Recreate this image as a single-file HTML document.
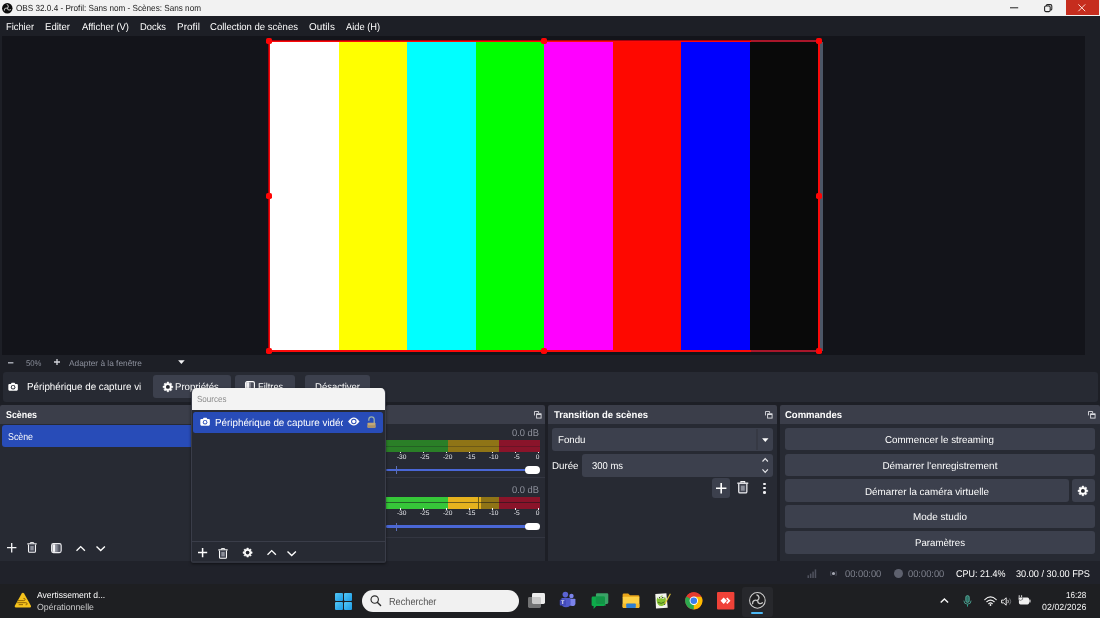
<!DOCTYPE html>
<html lang="fr"><head><meta charset="utf-8"><title>OBS 32.0.4</title>
<style>
*{box-sizing:border-box;margin:0;padding:0}
html,body{width:1100px;height:618px;overflow:hidden;background:#1d1f26}
body{position:relative;font-family:"Liberation Sans",sans-serif;color:#fefefe;font-size:9.9px;text-rendering:geometricPrecision}
.a{position:absolute}
.t{position:absolute;white-space:nowrap;line-height:12px;height:12px}
svg{position:absolute;overflow:visible}
#w{position:absolute;left:0;top:0;width:1100px;height:618px;will-change:transform;transform:translateZ(0)}
</style></head><body><div id="w">
<div class="a" style="left:0px;top:0px;width:1100px;height:16.3px;background:#f2f2f2;"></div>
<div class="a" style="left:0px;top:15.8px;width:1100px;height:0.8px;background:#8f9094;opacity:.5"></div>
<svg style="left:1.6px;top:2.6px" width="10.6" height="10.6" viewBox="0 0 11 11"><circle cx="5.5" cy="5.5" r="5.4" fill="#0b0b0b"/><g fill="none" stroke="#c4c4c4" stroke-width="1.05" stroke-linecap="round"><path d="M5.3 1.7C6.9 2.6 6.9 4.6 5.4 5.3"/><path d="M8.9 6.9C7.4 8 5.7 7 5.8 5.4"/><path d="M2.4 7.6C2.3 5.7 4 4.7 5.4 5.6"/></g></svg>
<div class="t" style="left:16.00px;top:1.70px;font-size:8.8px;color:#1c1c1c;transform:scaleX(0.9273);transform-origin:0 50%;">OBS 32.0.4 - Profil: Sans nom - Scènes: Sans nom</div>
<div class="a" style="left:1066px;top:0px;width:33px;height:15.3px;background:#c62d1e;"></div>
<svg style="left:1010px;top:6.7px" width="9" height="2" viewBox="0 0 9 2"><path d="M0 0.8H8.2" stroke="#222" stroke-width="1"/></svg>
<svg style="left:1043.5px;top:4px" width="9" height="9" viewBox="0 0 9 9"><rect x="0.6" y="2" width="5.6" height="5.6" rx="1.3" fill="none" stroke="#222" stroke-width="1.05"/><path d="M2.3 1.9V1.6Q2.3 0.6 3.4 0.6H6.4Q7.8 0.6 7.8 2V5Q7.8 6 6.8 6H6.3" fill="none" stroke="#222" stroke-width="1.05"/></svg>
<svg style="left:1078px;top:4px" width="8" height="8" viewBox="0 0 8 8"><path d="M0.4 0.4L7.2 7.2M7.2 0.4L0.4 7.2" stroke="#ffe9e0" stroke-width="0.95"/></svg>
<div class="a" style="left:0px;top:16px;width:1100px;height:20px;background:#1d1f26;"></div>
<div class="t" style="left:6.00px;top:21.90px;font-size:9.9px;color:#fefefe;transform:scaleX(0.9446);transform-origin:0 50%;">Fichier</div>
<div class="t" style="left:45.00px;top:21.90px;font-size:9.9px;color:#fefefe;transform:scaleX(0.9691);transform-origin:0 50%;">Editer</div>
<div class="t" style="left:82.00px;top:21.90px;font-size:9.9px;color:#fefefe;transform:scaleX(0.9549);transform-origin:0 50%;">Afficher (V)</div>
<div class="t" style="left:140.00px;top:21.90px;font-size:9.9px;color:#fefefe;transform:scaleX(0.9476);transform-origin:0 50%;">Docks</div>
<div class="t" style="left:177.00px;top:21.90px;font-size:9.9px;color:#fefefe;letter-spacing:0.083px;">Profil</div>
<div class="t" style="left:210.00px;top:21.90px;font-size:9.9px;color:#fefefe;transform:scaleX(0.9657);transform-origin:0 50%;">Collection de scènes</div>
<div class="t" style="left:309.00px;top:21.90px;font-size:9.9px;color:#fefefe;letter-spacing:0.125px;">Outils</div>
<div class="t" style="left:346.00px;top:21.90px;font-size:9.9px;color:#fefefe;transform:scaleX(0.9387);transform-origin:0 50%;">Aide (H)</div>
<div class="a" style="left:2px;top:36.4px;width:1083px;height:319.1px;background:#13141a;"></div>
<div class="a" style="left:820.4px;top:42px;width:2.4px;height:309px;background:#4c5767;"></div>
<div class="a" style="left:267.9px;top:39.9px;width:552.5px;height:312.4px;background:#a8000a;"></div>
<div class="a" style="left:268.9px;top:40.9px;width:551px;height:310.7px;background:#fb0a0a;"></div>
<div class="a" style="left:270.0px;top:42px;width:68.55px;height:308px;background:#ffffff;"></div>
<div class="a" style="left:338.5px;top:42px;width:68.55px;height:308px;background:#ffff00;"></div>
<div class="a" style="left:407.0px;top:42px;width:68.55px;height:308px;background:#00ffff;"></div>
<div class="a" style="left:475.5px;top:42px;width:68.55px;height:308px;background:#00ff00;"></div>
<div class="a" style="left:544.0px;top:42px;width:68.55px;height:308px;background:#ff00ff;"></div>
<div class="a" style="left:612.5px;top:42px;width:68.55px;height:308px;background:#fe0800;"></div>
<div class="a" style="left:681.0px;top:42px;width:68.55px;height:308px;background:#0000fe;"></div>
<div class="a" style="left:749.5px;top:42px;width:68.55px;height:308px;background:#090909;"></div>
<div class="a" style="left:750.5px;top:40.3px;width:67px;height:1.8px;background:#a8162a;"></div>
<div class="a" style="left:750.5px;top:350px;width:67px;height:2px;background:#a8162a;"></div>
<div class="a" style="left:265.79999999999995px;top:38.1px;width:6.2px;height:6.2px;background:#ff0505;border-radius:1.8px"></div>
<div class="a" style="left:540.9px;top:38.1px;width:6.2px;height:6.2px;background:#ff0505;border-radius:1.8px"></div>
<div class="a" style="left:816.3px;top:38.1px;width:6.2px;height:6.2px;background:#ff0505;border-radius:1.8px"></div>
<div class="a" style="left:265.79999999999995px;top:192.9px;width:6.2px;height:6.2px;background:#ff0505;border-radius:1.8px"></div>
<div class="a" style="left:816.3px;top:192.9px;width:6.2px;height:6.2px;background:#ff0505;border-radius:1.8px"></div>
<div class="a" style="left:265.79999999999995px;top:347.79999999999995px;width:6.2px;height:6.2px;background:#ff0505;border-radius:1.8px"></div>
<div class="a" style="left:540.9px;top:347.79999999999995px;width:6.2px;height:6.2px;background:#ff0505;border-radius:1.8px"></div>
<div class="a" style="left:816.3px;top:347.79999999999995px;width:6.2px;height:6.2px;background:#ff0505;border-radius:1.8px"></div>
<svg style="left:8px;top:361.5px" width="6" height="2" viewBox="0 0 6 2"><path d="M0 0.8H5.4" stroke="#b4b7c0" stroke-width="1.35"/></svg>
<div class="t" style="left:25.50px;top:357.40px;font-size:8.3px;color:#8b8f9b;transform:scaleX(0.9332);transform-origin:0 50%;">50%</div>
<svg style="left:53.5px;top:359.4px" width="6" height="6" viewBox="0 0 6 6"><path d="M3.0 0V6M0 3.0H6" stroke="#d2d4da" stroke-width="1.3" fill="none"/></svg>
<div class="t" style="left:69.00px;top:356.80px;font-size:8.3px;color:#8b8f9b;letter-spacing:0.005px;">Adapter à la fenêtre</div>
<svg style="left:177.5px;top:360.2px" width="6.6" height="4" viewBox="0 0 6.6 4"><path d="M0.1 0.2H6.700L3.400 4.100Z" fill="#f2f2f4"/></svg>
<div class="a" style="left:2.5px;top:371.6px;width:1095px;height:30.9px;background:#272a33;border-radius:3px"></div>
<svg style="left:8.1px;top:382.1px" width="10.2" height="9" viewBox="0 0 11 10"><path d="M1.4 2.2H3L3.9 0.7H7.1L8 2.2H9.6Q10.8 2.2 10.8 3.4V8.4Q10.8 9.6 9.6 9.6H1.4Q0.2 9.6 0.2 8.4V3.4Q0.2 2.2 1.4 2.2Z" fill="#fefefe"/><circle cx="5.5" cy="5.7" r="2.5" fill="#272a33"/><circle cx="5.5" cy="5.7" r="1.45" fill="#fefefe"/></svg>
<div class="t" style="left:27.30px;top:381.80px;font-size:10.2px;color:#fefefe;transform:scaleX(0.9602);transform-origin:0 50%;">Périphérique de capture vi</div>
<div class="a" style="left:153px;top:375px;width:78px;height:23.2px;background:#3c404d;border-radius:3px"></div>
<div class="a" style="left:235px;top:375px;width:59.8px;height:23.2px;background:#3c404d;border-radius:3px"></div>
<div class="a" style="left:305px;top:375px;width:65px;height:23.2px;background:#3c404d;border-radius:3px"></div>
<svg style="left:162.6px;top:381.90000000000003px" width="9.8" height="9.8" viewBox="0 0 9.8 9.8"><path d="M4.06 0.07L5.74 0.07L5.77 1.28L6.85 1.72L7.72 0.89L8.91 2.08L8.08 2.95L8.52 4.03L9.73 4.06L9.73 5.74L8.52 5.77L8.08 6.85L8.91 7.72L7.72 8.91L6.85 8.08L5.77 8.52L5.74 9.73L4.06 9.73L4.03 8.52L2.95 8.08L2.08 8.91L0.89 7.72L1.72 6.85L1.28 5.77L0.07 5.74L0.07 4.06L1.28 4.03L1.72 2.95L0.89 2.08L2.08 0.89L2.95 1.72L4.03 1.28Z" fill="#fefefe" stroke="#fefefe" stroke-width="0.5" stroke-linejoin="round"/><circle cx="4.9" cy="4.9" r="1.96" fill="#25272f"/></svg>
<div class="t" style="left:175.20px;top:382.00px;font-size:9.9px;color:#fefefe;transform:scaleX(0.9730);transform-origin:0 50%;">Propriétés</div>
<svg style="left:245.2px;top:381.3px" width="10" height="10" viewBox="0 0 10 10"><rect x="0.6" y="0.6" width="8.800" height="8.800" rx="1.500" fill="#4a4d59" stroke="#fefefe" stroke-width="1.1"/><rect x="1.2" y="1.2" width="3" height="7.600" fill="#f0f0f3"/><rect x="4.2" y="1.2" width="1.500" height="7.600" fill="#9a9ca7"/></svg>
<div class="t" style="left:257.80px;top:382.00px;font-size:9.9px;color:#fefefe;transform:scaleX(0.9371);transform-origin:0 50%;">Filtres</div>
<div class="t" style="left:315.00px;top:382.00px;font-size:9.9px;color:#fefefe;transform:scaleX(0.9645);transform-origin:0 50%;">Désactiver</div>
<div class="a" style="left:0px;top:405px;width:200px;height:19px;background:#3b3e4a;border-radius:2px 2px 0 0"></div>
<div class="a" style="left:0px;top:424px;width:200px;height:137px;background:#272a33;"></div>
<div class="t" style="left:5.50px;top:409.70px;font-size:9.9px;color:#fefefe;font-weight:700;transform:scaleX(0.8961);transform-origin:0 50%;">Scènes</div>
<div class="a" style="left:2px;top:425px;width:190px;height:21.6px;background:#284cb8;border-radius:3px 0 0 3px"></div>
<div class="t" style="left:8.00px;top:432.00px;font-size:9.9px;color:#fefefe;transform:scaleX(0.8924);transform-origin:0 50%;">Scène</div>
<svg style="left:6.7px;top:543.0px" width="9.4" height="9.4" viewBox="0 0 9.4 9.4"><path d="M4.7 0V9.4M0 4.7H9.4" stroke="#f4f4f6" stroke-width="1.3" fill="none"/></svg>
<svg style="left:26.7px;top:542.4px" width="10.0" height="11.0" viewBox="0 0 10 11"><path d="M0.3 1.9H9.7" stroke="#f4f4f6" stroke-width="1.2" fill="none"/><path d="M3.4 1.6V0.6H6.6V1.6" stroke="#f4f4f6" stroke-width="1" fill="none"/><path d="M1.5 2.6V9.2Q1.5 10.3 2.6 10.3H7.4Q8.5 10.3 8.5 9.2V2.6" stroke="#f4f4f6" stroke-width="1.05" fill="#3f424e"/><rect x="3.3" y="4" width="3.4" height="4.4" fill="#8b8e99"/></svg>
<svg style="left:50.7px;top:543px" width="10.8" height="10.2" viewBox="0 0 10.8 10.2"><rect x="0.6" y="0.6" width="9.600" height="9" rx="1.800" fill="#4d505c" stroke="#eeeef1" stroke-width="1.100"/><rect x="1.500" y="1.300" width="2.700" height="7.600" fill="#f4f4f6"/><rect x="4.200" y="1.300" width="1.600" height="7.600" fill="#a2a4ae"/><rect x="5.800" y="1.300" width="1.600" height="7.600" fill="#777a86"/></svg>
<svg style="left:75.5px;top:546.05px" width="9.4" height="4.7" viewBox="0 0 9.4 4.7"><path d="M0.5 4.7L4.7 0.6L8.9 4.7" stroke="#fefefe" stroke-width="1.35" fill="none" stroke-linejoin="miter"/></svg>
<svg style="left:95.6px;top:546.25px" width="9.4" height="4.7" viewBox="0 0 9.4 4.7"><path d="M0.5 0.4L4.7 4.5L8.9 0.4" stroke="#fefefe" stroke-width="1.35" fill="none" stroke-linejoin="miter"/></svg>
<div class="a" style="left:386px;top:405px;width:158.5px;height:19px;background:#3b3e4a;border-radius:2px 2px 0 0"></div>
<div class="a" style="left:386px;top:424px;width:158.5px;height:137px;background:#272a33;"></div>
<svg style="left:534.2px;top:411.0px" width="7.6" height="7.6" viewBox="0 0 7.6 7.6"><path d="M0.5 4.4V0.5H4.6V2" stroke="#dcdde2" stroke-width="0.9" fill="none"/><rect x="2.6" y="2.9" width="4.5" height="4.2" stroke="#dcdde2" stroke-width="0.9" fill="none"/><path d="M2.6 3.3H7.1" stroke="#dcdde2" stroke-width="1.4" fill="none"/></svg>
<div class="a" style="left:386px;top:477.3px;width:158.5px;height:1px;background:#333641;"></div>
<div class="a" style="left:386px;top:537px;width:158.5px;height:1px;background:#333641;"></div>
<div class="t" style="left:511.80px;top:428.40px;font-size:9.8px;color:#8e919c;transform:scaleX(0.9531);transform-origin:0 50%;">0.0 dB</div>
<div class="a" style="left:386px;top:440.3px;width:62.39999999999998px;height:11.8px;background:#2a7f27;"></div>
<div class="a" style="left:448.4px;top:440.3px;width:50.200000000000045px;height:11.8px;background:#8f7416;"></div>
<div class="a" style="left:498.6px;top:440.3px;width:41.10000000000002px;height:11.8px;background:#8a142a;"></div>
<div class="a" style="left:386px;top:445.7px;width:153.70000000000005px;height:1px;background:rgba(20,22,28,.28);"></div>
<div class="a" style="left:400.0px;top:451.5px;width:1px;height:1.9px;background:#f2f2f4;"></div>
<div class="t" style="left:396.93px;top:451.50px;font-size:6.6px;color:#e4e5ea;">-30</div>
<div class="a" style="left:423.0px;top:451.5px;width:1px;height:1.9px;background:#f2f2f4;"></div>
<div class="t" style="left:419.93px;top:451.50px;font-size:6.6px;color:#e4e5ea;">-25</div>
<div class="a" style="left:446.0px;top:451.5px;width:1px;height:1.9px;background:#f2f2f4;"></div>
<div class="t" style="left:442.93px;top:451.50px;font-size:6.6px;color:#e4e5ea;">-20</div>
<div class="a" style="left:469.0px;top:451.5px;width:1px;height:1.9px;background:#f2f2f4;"></div>
<div class="t" style="left:465.93px;top:451.50px;font-size:6.6px;color:#e4e5ea;">-15</div>
<div class="a" style="left:492.0px;top:451.5px;width:1px;height:1.9px;background:#f2f2f4;"></div>
<div class="t" style="left:488.93px;top:451.50px;font-size:6.6px;color:#e4e5ea;">-10</div>
<div class="a" style="left:515.0px;top:451.5px;width:1px;height:1.9px;background:#f2f2f4;"></div>
<div class="t" style="left:513.76px;top:451.50px;font-size:6.6px;color:#e4e5ea;">-5</div>
<div class="a" style="left:538.0px;top:451.5px;width:1px;height:1.9px;background:#f2f2f4;"></div>
<div class="t" style="left:535.86px;top:451.50px;font-size:6.6px;color:#e4e5ea;">0</div>
<div class="a" style="left:386px;top:468.7px;width:141px;height:2.7px;background:#4a67d6;border-radius:1.3px"></div>
<div class="a" style="left:396px;top:466px;width:1px;height:8px;background:#5b6fb8;"></div>
<div class="a" style="left:525px;top:466.1px;width:14.6px;height:7.8px;background:#ffffff;border-radius:3.9px"></div>
<div class="t" style="left:511.80px;top:484.80px;font-size:9.8px;color:#8e919c;transform:scaleX(0.9531);transform-origin:0 50%;">0.0 dB</div>
<div class="a" style="left:386px;top:496.8px;width:62.39999999999998px;height:11.8px;background:#36c739;"></div>
<div class="a" style="left:448.4px;top:496.8px;width:32.200000000000045px;height:11.8px;background:#e6b21e;"></div>
<div class="a" style="left:480.6px;top:496.8px;width:18.0px;height:11.8px;background:#8f7416;"></div>
<div class="a" style="left:498.6px;top:496.8px;width:41.10000000000002px;height:11.8px;background:#8a142a;"></div>
<div class="a" style="left:386px;top:502.2px;width:153.70000000000005px;height:1px;background:rgba(20,22,28,.55);"></div>
<div class="a" style="left:477.6px;top:496.8px;width:0.9px;height:11.8px;background:#6b5a14;"></div>
<div class="a" style="left:400.0px;top:508.0px;width:1px;height:1.9px;background:#f2f2f4;"></div>
<div class="t" style="left:396.93px;top:508.00px;font-size:6.6px;color:#e4e5ea;">-30</div>
<div class="a" style="left:423.0px;top:508.0px;width:1px;height:1.9px;background:#f2f2f4;"></div>
<div class="t" style="left:419.93px;top:508.00px;font-size:6.6px;color:#e4e5ea;">-25</div>
<div class="a" style="left:446.0px;top:508.0px;width:1px;height:1.9px;background:#f2f2f4;"></div>
<div class="t" style="left:442.93px;top:508.00px;font-size:6.6px;color:#e4e5ea;">-20</div>
<div class="a" style="left:469.0px;top:508.0px;width:1px;height:1.9px;background:#f2f2f4;"></div>
<div class="t" style="left:465.93px;top:508.00px;font-size:6.6px;color:#e4e5ea;">-15</div>
<div class="a" style="left:492.0px;top:508.0px;width:1px;height:1.9px;background:#f2f2f4;"></div>
<div class="t" style="left:488.93px;top:508.00px;font-size:6.6px;color:#e4e5ea;">-10</div>
<div class="a" style="left:515.0px;top:508.0px;width:1px;height:1.9px;background:#f2f2f4;"></div>
<div class="t" style="left:513.76px;top:508.00px;font-size:6.6px;color:#e4e5ea;">-5</div>
<div class="a" style="left:538.0px;top:508.0px;width:1px;height:1.9px;background:#f2f2f4;"></div>
<div class="t" style="left:535.86px;top:508.00px;font-size:6.6px;color:#e4e5ea;">0</div>
<div class="a" style="left:386px;top:525.2px;width:141px;height:2.7px;background:#4a67d6;border-radius:1.3px"></div>
<div class="a" style="left:396px;top:522.5px;width:1px;height:8px;background:#5b6fb8;"></div>
<div class="a" style="left:525px;top:522.6px;width:14.6px;height:7.8px;background:#ffffff;border-radius:3.9px"></div>
<div class="a" style="left:548px;top:405px;width:229px;height:19px;background:#3b3e4a;border-radius:2px 2px 0 0"></div>
<div class="a" style="left:548px;top:424px;width:229px;height:137px;background:#272a33;"></div>
<div class="t" style="left:553.50px;top:409.70px;font-size:9.9px;color:#fefefe;font-weight:700;transform:scaleX(0.9621);transform-origin:0 50%;">Transition de scènes</div>
<svg style="left:764.6px;top:411.0px" width="7.6" height="7.6" viewBox="0 0 7.6 7.6"><path d="M0.5 4.4V0.5H4.6V2" stroke="#dcdde2" stroke-width="0.9" fill="none"/><rect x="2.6" y="2.9" width="4.5" height="4.2" stroke="#dcdde2" stroke-width="0.9" fill="none"/><path d="M2.6 3.3H7.1" stroke="#dcdde2" stroke-width="1.4" fill="none"/></svg>
<div class="a" style="left:551.6px;top:427.8px;width:221.6px;height:22.8px;background:#3c404d;border-radius:3px"></div>
<div class="a" style="left:756.4px;top:428.5px;width:1.2px;height:21.4px;background:#363944;"></div>
<div class="a" style="left:756.4px;top:454.7px;width:1.2px;height:21.4px;background:#373a45;"></div>
<div class="a" style="left:758px;top:464.9px;width:14.6px;height:0.9px;background:#373a45;"></div>
<div class="t" style="left:557.60px;top:435.30px;font-size:9.9px;color:#fefefe;transform:scaleX(0.9816);transform-origin:0 50%;">Fondu</div>
<svg style="left:761.7px;top:438px" width="6.6" height="4" viewBox="0 0 6.6 4"><path d="M0.1 0.2H6.500L3.300 3.900Z" fill="#fefefe"/></svg>
<div class="t" style="left:551.60px;top:461.40px;font-size:9.9px;color:#fefefe;transform:scaleX(0.9849);transform-origin:0 50%;">Durée</div>
<div class="a" style="left:582px;top:454px;width:191.2px;height:22.8px;background:#3c404d;border-radius:3px"></div>
<div class="t" style="left:592.30px;top:461.40px;font-size:9.9px;color:#fefefe;transform:scaleX(0.9571);transform-origin:0 50%;">300 ms</div>
<svg style="left:761.6999999999999px;top:457.55px" width="6.4" height="3.5" viewBox="0 0 6.4 3.5"><path d="M0.5 3.5L3.2 0.6L5.9 3.5" stroke="#e6e6ea" stroke-width="1.15" fill="none" stroke-linejoin="miter"/></svg>
<svg style="left:761.6999999999999px;top:468.65px" width="6.4" height="3.5" viewBox="0 0 6.4 3.5"><path d="M0.5 0.4L3.2 3.3L5.9 0.4" stroke="#e6e6ea" stroke-width="1.15" fill="none" stroke-linejoin="miter"/></svg>
<div class="a" style="left:712.3px;top:478.3px;width:18px;height:19.5px;background:#3c404d;border-radius:3px"></div>
<svg style="left:716.1999999999999px;top:482.90000000000003px" width="10.4" height="10.4" viewBox="0 0 10.4 10.4"><path d="M5.2 0V10.4M0 5.2H10.4" stroke="#fefefe" stroke-width="1.6" fill="none"/></svg>
<svg style="left:736.9000000000001px;top:481.12px" width="11.6" height="12.76" viewBox="0 0 10 11"><path d="M0.3 1.9H9.7" stroke="#f0f0f3" stroke-width="1.2" fill="none"/><path d="M3.4 1.6V0.6H6.6V1.6" stroke="#f0f0f3" stroke-width="1" fill="none"/><path d="M1.5 2.6V9.2Q1.5 10.3 2.6 10.3H7.4Q8.5 10.3 8.5 9.2V2.6" stroke="#f0f0f3" stroke-width="1.05" fill="#3f424e"/><rect x="3.3" y="4" width="3.4" height="4.4" fill="#8b8e99"/></svg>
<div class="a" style="left:763.3px;top:482.59999999999997px;width:2.6px;height:2.6px;background:#f0f0f3;border-radius:50%"></div>
<div class="a" style="left:763.3px;top:486.9px;width:2.6px;height:2.6px;background:#f0f0f3;border-radius:50%"></div>
<div class="a" style="left:763.3px;top:491.2px;width:2.6px;height:2.6px;background:#f0f0f3;border-radius:50%"></div>
<div class="a" style="left:779.6px;top:405px;width:320.4px;height:19px;background:#3b3e4a;border-radius:2px 2px 0 0"></div>
<div class="a" style="left:779.6px;top:424px;width:320.4px;height:137px;background:#272a33;"></div>
<div class="t" style="left:785.10px;top:409.70px;font-size:9.9px;color:#fefefe;font-weight:700;transform:scaleX(0.9618);transform-origin:0 50%;">Commandes</div>
<svg style="left:1087.5px;top:411.0px" width="7.6" height="7.6" viewBox="0 0 7.6 7.6"><path d="M0.5 4.4V0.5H4.6V2" stroke="#dcdde2" stroke-width="0.9" fill="none"/><rect x="2.6" y="2.9" width="4.5" height="4.2" stroke="#dcdde2" stroke-width="0.9" fill="none"/><path d="M2.6 3.3H7.1" stroke="#dcdde2" stroke-width="1.4" fill="none"/></svg>
<div class="a" style="left:785px;top:427.7px;width:309.79999999999995px;height:22.8px;background:#3c404d;border-radius:3px"></div>
<div class="t" style="left:885.40px;top:435.30px;font-size:9.9px;color:#fefefe;transform:scaleX(0.9881);transform-origin:0 50%;">Commencer le streaming</div>
<div class="a" style="left:785px;top:453.57px;width:309.79999999999995px;height:22.8px;background:#3c404d;border-radius:3px"></div>
<div class="t" style="left:882.41px;top:461.00px;font-size:9.9px;color:#fefefe;letter-spacing:0.024px;">Démarrer l&#x27;enregistrement</div>
<div class="a" style="left:785px;top:479.44px;width:284px;height:22.8px;background:#3c404d;border-radius:3px"></div>
<div class="a" style="left:1072px;top:479.44px;width:22.8px;height:22.8px;background:#3c404d;border-radius:3px"></div>
<svg style="left:1078.3999999999999px;top:486.04px" width="9.8" height="9.8" viewBox="0 0 9.8 9.8"><path d="M4.06 0.07L5.74 0.07L5.77 1.28L6.85 1.72L7.72 0.89L8.91 2.08L8.08 2.95L8.52 4.03L9.73 4.06L9.73 5.74L8.52 5.77L8.08 6.85L8.91 7.72L7.72 8.91L6.85 8.08L5.77 8.52L5.74 9.73L4.06 9.73L4.03 8.52L2.95 8.08L2.08 8.91L0.89 7.72L1.72 6.85L1.28 5.77L0.07 5.74L0.07 4.06L1.28 4.03L1.72 2.95L0.89 2.08L2.08 0.89L2.95 1.72L4.03 1.28Z" fill="#fefefe" stroke="#fefefe" stroke-width="0.5" stroke-linejoin="round"/><circle cx="4.9" cy="4.9" r="1.96" fill="#25272f"/></svg>
<div class="t" style="left:865.00px;top:486.70px;font-size:9.9px;color:#fefefe;transform:scaleX(0.9954);transform-origin:0 50%;">Démarrer la caméra virtuelle</div>
<div class="a" style="left:785px;top:505.31px;width:309.79999999999995px;height:22.8px;background:#3c404d;border-radius:3px"></div>
<div class="t" style="left:912.91px;top:512.40px;font-size:9.9px;color:#fefefe;letter-spacing:0.018px;">Mode studio</div>
<div class="a" style="left:785px;top:531.18px;width:309.79999999999995px;height:22.8px;background:#3c404d;border-radius:3px"></div>
<div class="t" style="left:914.90px;top:538.10px;font-size:9.9px;color:#fefefe;transform:scaleX(0.9795);transform-origin:0 50%;">Paramètres</div>
<div class="a" style="left:0px;top:561px;width:1100px;height:23.6px;background:#20222a;"></div>
<svg style="left:807px;top:569px" width="10" height="9" viewBox="0 0 10 9"><g fill="#50535f"><rect x="0.5" y="6.3" width="1.5" height="2.7"/><rect x="2.9" y="4.6" width="1.5" height="4.4"/><rect x="5.3" y="2.6" width="1.5" height="6.4"/><rect x="7.7" y="0.4" width="1.5" height="8.6"/></g></svg>
<svg style="left:828px;top:569px" width="11" height="9" viewBox="0 0 11 9"><circle cx="5.5" cy="4.5" r="1.6" fill="#a4a7b2"/><g fill="none" stroke="#4c4f5b" stroke-width="1"><path d="M3.1 2.1Q1.9 4.5 3.1 6.9"/><path d="M7.9 2.1Q9.1 4.5 7.900 6.9"/></g></svg>
<div class="t" style="left:844.60px;top:568.60px;font-size:9.8px;color:#7d808c;transform:scaleX(0.9517);transform-origin:0 50%;">00:00:00</div>
<div class="a" style="left:893.8px;top:569.1px;width:9.2px;height:9.2px;background:#5e616e;border-radius:50%"></div>
<div class="t" style="left:908.20px;top:568.60px;font-size:9.8px;color:#7d808c;transform:scaleX(0.9517);transform-origin:0 50%;">00:00:00</div>
<div class="t" style="left:956.00px;top:568.60px;font-size:9.8px;color:#fefefe;transform:scaleX(0.9180);transform-origin:0 50%;">CPU: 21.4%</div>
<div class="t" style="left:1016.30px;top:568.60px;font-size:9.8px;color:#fefefe;transform:scaleX(0.9369);transform-origin:0 50%;">30.00 / 30.00 FPS</div>
<div class="a" style="left:190.8px;top:388px;width:195.1px;height:175.4px;border-radius:5px 5px 2px 2px;background:#272a33;box-shadow:0 1px 3px rgba(0,0,0,.5);border:0.8px solid #3a3d49;border-top:none;border-bottom:2px solid #30333d;overflow:hidden"><div class="a" style="left:0;top:0;width:100%;height:21.7px;background:#f3f3f3"></div><div class="a" style="left:0;top:153.4px;width:100%;height:1px;background:#3a3d49"></div></div>
<div class="t" style="left:197.30px;top:393.30px;font-size:8.8px;color:#8c8c8c;transform:scaleX(0.9138);transform-origin:0 50%;">Sources</div>
<div class="a" style="left:193px;top:411.5px;width:190.4px;height:21px;background:#284cb8;border-radius:2.5px"></div>
<svg style="left:199.9px;top:417.2px" width="10.2" height="9" viewBox="0 0 11 10"><path d="M1.4 2.2H3L3.9 0.7H7.1L8 2.2H9.6Q10.8 2.2 10.8 3.4V8.4Q10.8 9.6 9.6 9.6H1.4Q0.2 9.6 0.2 8.4V3.4Q0.2 2.2 1.4 2.2Z" fill="#fefefe"/><circle cx="5.5" cy="5.7" r="2.5" fill="#284cb8"/><circle cx="5.5" cy="5.7" r="1.45" fill="#fefefe"/></svg>
<div class="a" style="left:215.3px;top:416.2px;width:127.4px;height:16px;overflow:hidden"><div class="t" style="left:0.00px;top:2.00px;font-size:10.2px;color:#fefefe;transform:scaleX(0.9637);transform-origin:0 50%;">Périphérique de capture vidéo</div></div>
<svg style="left:347.8px;top:417.2px" width="11.6" height="9" viewBox="0 0 11.6 9"><path d="M0.1 4.5Q5.8 -3.300 11.500 4.5Q5.8 12.300 0.1 4.5Z" fill="#fefefe"/><circle cx="5.8" cy="4.5" r="2.700" fill="#284cb8"/><circle cx="5.8" cy="4.5" r="1.700" fill="#fefefe"/></svg>
<svg style="left:367.4px;top:415.7px" width="9" height="12" viewBox="0 0 9 12"><path d="M1.800 4.700V3.600Q1.800 0.8 4.500 0.8Q7.200 0.8 7.200 3.600V7" fill="none" stroke="#9db2a6" stroke-width="1.250"/><rect x="0.5" y="6.800" width="8" height="4.900" rx="0.6" fill="#c3a877"/><rect x="0.5" y="9.300" width="8" height="2.400" rx="0.6" fill="#ab9269"/></svg>
<svg style="left:198.1px;top:548.4px" width="9.2" height="9.2" viewBox="0 0 9.2 9.2"><path d="M4.6 0V9.2M0 4.6H9.2" stroke="#fefefe" stroke-width="1.5" fill="none"/></svg>
<svg style="left:218.2px;top:547.5px" width="10.0" height="11.0" viewBox="0 0 10 11"><path d="M0.3 1.9H9.7" stroke="#fefefe" stroke-width="1.2" fill="none"/><path d="M3.4 1.6V0.6H6.6V1.6" stroke="#fefefe" stroke-width="1" fill="none"/><path d="M1.5 2.6V9.2Q1.5 10.3 2.6 10.3H7.4Q8.5 10.3 8.5 9.2V2.6" stroke="#fefefe" stroke-width="1.05" fill="#3f424e"/><rect x="3.3" y="4" width="3.4" height="4.4" fill="#8b8e99"/></svg>
<svg style="left:243.0px;top:548.4px" width="9.2" height="9.2" viewBox="0 0 9.2 9.2"><path d="M3.81 0.07L5.39 0.07L5.42 1.20L6.43 1.62L7.25 0.84L8.36 1.95L7.58 2.77L8.00 3.78L9.13 3.81L9.13 5.39L8.00 5.42L7.58 6.43L8.36 7.25L7.25 8.36L6.43 7.58L5.42 8.00L5.39 9.13L3.81 9.13L3.78 8.00L2.77 7.58L1.95 8.36L0.84 7.25L1.62 6.43L1.20 5.42L0.07 5.39L0.07 3.81L1.20 3.78L1.62 2.77L0.84 1.95L1.95 0.84L2.77 1.62L3.78 1.20Z" fill="#fefefe" stroke="#fefefe" stroke-width="0.5" stroke-linejoin="round"/><circle cx="4.6" cy="4.6" r="1.84" fill="#25272f"/></svg>
<svg style="left:266.8px;top:550.35px" width="9.4" height="4.7" viewBox="0 0 9.4 4.7"><path d="M0.5 4.7L4.7 0.6L8.9 4.7" stroke="#fefefe" stroke-width="1.35" fill="none" stroke-linejoin="miter"/></svg>
<svg style="left:286.8px;top:550.9499999999999px" width="9.4" height="4.7" viewBox="0 0 9.4 4.7"><path d="M0.5 0.4L4.7 4.5L8.9 0.4" stroke="#fefefe" stroke-width="1.35" fill="none" stroke-linejoin="miter"/></svg>
<div class="a" style="left:0px;top:584.4px;width:1100px;height:33.6px;background:#1e1f22;"></div>
<svg style="left:14px;top:591.8px" width="17.8" height="16.4" viewBox="0 0 19 17.5"><path d="M9.5 0.9Q10.3 0.9 10.800 1.7L18.100 14.600Q18.800 16.200 17.100 16.500H1.900Q0.2 16.200 0.9 14.600L8.2 1.7Q8.7 0.9 9.5 0.9Z" fill="#f6c31c"/><g fill="none" stroke="#8a5f06" stroke-width="1" stroke-linecap="round"><path d="M4.2 9.200H10.400Q12 9.100 11.900 7.700Q11.700 6.600 10.500 6.800"/><path d="M3.800 11.400H12.600Q14.200 11.500 14.100 12.900Q13.900 13.900 12.800 13.700"/><path d="M5.400 13.500H9.200"/></g></svg>
<div class="t" style="left:36.80px;top:588.80px;font-size:8.8px;color:#fefefe;transform:scaleX(0.9708);transform-origin:0 50%;">Avertissement d...</div>
<div class="t" style="left:37.00px;top:600.80px;font-size:8.9px;color:#c9c9c9;transform:scaleX(0.9873);transform-origin:0 50%;">Opérationnelle</div>
<div class="a" style="left:335px;top:592.8px;width:8.2px;height:8px;background:linear-gradient(135deg,#53c7f6,#1c9be6);border-radius:1px"></div>
<div class="a" style="left:344px;top:592.8px;width:8.2px;height:8px;background:linear-gradient(135deg,#53c7f6,#1c9be6);border-radius:1px"></div>
<div class="a" style="left:335px;top:601.6px;width:8.2px;height:8px;background:linear-gradient(135deg,#53c7f6,#1c9be6);border-radius:1px"></div>
<div class="a" style="left:344px;top:601.6px;width:8.2px;height:8px;background:linear-gradient(135deg,#53c7f6,#1c9be6);border-radius:1px"></div>
<div class="a" style="left:362px;top:589.8px;width:156.6px;height:21.8px;background:#f1f1f1;border-radius:11px"></div>
<svg style="left:369.5px;top:595px" width="11.5" height="11.5" viewBox="0 0 11.5 11.5"><circle cx="4.7" cy="4.5" r="3.700" fill="none" stroke="#2b2b2b" stroke-width="1.150"/><path d="M7.500 7.400L10.600 10.500" stroke="#2b2b2b" stroke-width="1.400" stroke-linecap="round"/></svg>
<div class="t" style="left:388.80px;top:597.20px;font-size:10.3px;color:#515151;transform:scaleX(0.8904);transform-origin:0 50%;">Rechercher</div>
<div class="a" style="left:532px;top:593px;width:13px;height:11px;background:#ececec;border-radius:1.4px"></div>
<div class="a" style="left:528px;top:597.2px;width:13.2px;height:10.7px;background:rgba(176,176,176,.58);border-radius:1.4px"></div>
<svg style="left:558.6px;top:590.9px" width="17.4" height="17.6" viewBox="0 0 18 18"><circle cx="12.900" cy="5" r="2.300" fill="#7b83eb"/><circle cx="6.6" cy="3.600" r="2.9" fill="#5b63d3"/><path d="M9.5 7.800H16.200Q17 7.800 17 8.600V12.500Q17 15.500 13.600 15.500Q11 15.500 9.5 13Z" fill="#7b83eb"/><path d="M2.6 7.200H11.200Q12 7.200 12 8V12.600Q12 16.800 7.300 16.800Q2.6 16.800 2.6 12.600Z" fill="#5059c9"/><rect x="0.8" y="8.600" width="6.400" height="6.400" rx="1" fill="#4149b8"/><text x="4" y="13.600" font-family="Liberation Sans,sans-serif" font-size="5.2" font-weight="700" fill="#fff" text-anchor="middle">T</text></svg>
<svg style="left:590.5px;top:592.5px" width="18" height="17" viewBox="0 0 18 17"><path d="M6.2 0.3H16Q17.300 0.3 17.300 1.600V9.600Q17.300 10.900 16 10.900H14.500V13L12 10.900H6.2Q4.900 10.900 4.900 9.600V1.600Q4.900 0.3 6.2 0.3Z" fill="#3ba367"/><path d="M1.9 3.600H12.600Q13.900 3.600 13.900 4.900V11.700Q13.900 13 12.600 13H5.300L2.600 15.900V13H1.900Q0.6 13 0.6 11.700V4.900Q0.6 3.600 1.900 3.600Z" fill="#0dab4a"/><path d="M4.900 3.600H12.600Q13.900 3.600 13.900 4.900V10.900H6.2Q4.900 10.900 4.900 9.600Z" fill="#129446"/></svg>
<svg style="left:621.5px;top:593px" width="18" height="15.5" viewBox="0 0 18 15.5"><path d="M0.6 1.9Q0.6 0.6 1.900 0.6H6.200L8 2.300H16.100Q17.400 2.300 17.400 3.600V5H0.6Z" fill="#e9a51a"/><rect x="0.6" y="3.800" width="16.800" height="11.200" rx="1.300" fill="#fdd045"/><rect x="0.6" y="10.600" width="16.800" height="4.400" rx="1.2" fill="#f5bb2b"/><rect x="4.2" y="10.400" width="9.600" height="4.600" rx="0.8" fill="#2d7fd3"/></svg>
<svg style="left:653.5px;top:591.5px" width="17" height="18" viewBox="0 0 17 18"><path d="M1.300 1.900L12.400 1.300L13.700 15.800L2 16.600Z" fill="#f4f4ee"/><path d="M2.6 8.200Q3.200 4 6.600 4.400Q8 2.800 9.600 4.400Q12.300 5 11.800 8.600Q12.800 12.800 8.200 13.900Q3.200 14.400 2.600 8.200Z" fill="#86c232"/><ellipse cx="5.300" cy="5.600" rx="1.500" ry="1.400" fill="#fff"/><ellipse cx="8.900" cy="5.400" rx="1.500" ry="1.400" fill="#fff"/><circle cx="5.500" cy="5.700" r="0.7" fill="#1c2a0e"/><circle cx="8.800" cy="5.500" r="0.7" fill="#1c2a0e"/><path d="M4 10.300Q7.200 12.600 10.600 9.900" stroke="#39611a" stroke-width="0.8" fill="none"/><path d="M10.300 11.600L15.900 1.500L16.900 2.100L11.300 12.200Z" fill="#e0c437"/><path d="M10.300 11.600L9.900 13.200L11.300 12.200Z" fill="#333"/></svg>
<svg style="left:685px;top:591.6px" width="17.6" height="17.6" viewBox="0 0 17.6 17.6"><circle cx="8.800" cy="8.800" r="8.600" fill="#e33b2e"/><path d="M8.800 8.800L1.350 4.500A8.600 8.600 0 0 0 8.8 17.400L13.100 10Z" fill="#2da94f"/><path d="M8.800 8.800L8.800 17.400A8.600 8.600 0 0 0 16.250 4.500L8.800 4.500Z" fill="#fdbd00"/><path d="M1.350 4.500A8.600 8.600 0 0 1 16.250 4.500L8.800 4.500Z" fill="#e33b2e"/><circle cx="8.800" cy="8.800" r="4.200" fill="#fff"/><circle cx="8.800" cy="8.800" r="3.300" fill="#3b7ded"/></svg>
<svg style="left:716.8px;top:591.9px" width="17.4" height="17.6" viewBox="0 0 17.4 17.6"><rect x="0" y="0" width="17.400" height="17.600" rx="1" fill="#ef4238"/><path d="M6.700 5.600L9.900 8.800L6.700 12L3.500 8.800Z" fill="#fff"/><path d="M10.300 5.600L13.500 8.800L10.300 12L9.100 10.800L11.100 8.800L9.100 6.800Z" fill="#fff"/></svg>
<div class="a" style="left:742px;top:586.6px;width:30.5px;height:30.5px;background:#27282c;border-radius:3px"></div>
<svg style="left:748.5px;top:591.9px" width="16.8" height="16.8" viewBox="0 0 16.8 16.8"><circle cx="8.400" cy="8.400" r="7.800" fill="#202022" stroke="#cdcdcd" stroke-width="1.050"/><g fill="none" stroke="#c6c6c6" stroke-width="1.350" stroke-linecap="round"><path d="M7.900 2.900C10.600 4.100 10.700 7.100 8.300 8.300"/><path d="M13.400 10.800C11.200 12.500 8.500 11.100 8.700 8.600"/><path d="M3.600 11.600C3.400 8.800 6 7.300 8.100 8.600"/></g></svg>
<div class="a" style="left:751.3px;top:612.2px;width:11.3px;height:2.1px;background:#4cb8f4;border-radius:1px"></div>
<svg style="left:939.7px;top:598.4px" width="8.8" height="5.2" viewBox="0 0 8.8 5.2"><path d="M0.7 4.500L4.400 0.9L8.100 4.500" stroke="#f4f4f4" stroke-width="1.450" fill="none"/></svg>
<svg style="left:962.7px;top:594.8px" width="9" height="12.6" viewBox="0 0 9 12.6"><rect x="2.800" y="0.600" width="3.400" height="6.800" rx="1.700" fill="#2b6f64" stroke="#58aa9a" stroke-width="0.9"/><path d="M0.900 5.600Q0.900 9.200 4.500 9.200Q8.100 9.200 8.100 5.600" fill="none" stroke="#4a9c8d" stroke-width="0.950"/><path d="M4.500 9.200V11.600" stroke="#2f9f8a" stroke-width="1"/></svg>
<svg style="left:983.6px;top:595.8px" width="13" height="10" viewBox="0 0 13 10"><g fill="none" stroke="#f2f2f2" stroke-width="1.150" stroke-linecap="round"><path d="M0.8 3.600Q6.500 -1.700 12.200 3.600"/><path d="M2.800 5.700Q6.500 2.400 10.200 5.700"/><path d="M4.700 7.600Q6.500 6.100 8.300 7.600"/></g><circle cx="6.500" cy="9" r="0.9" fill="#f2f2f2"/></svg>
<svg style="left:1001px;top:596.6px" width="12" height="9" viewBox="0 0 12 9"><path d="M0.600 3.100H2.600L5.200 0.800V8.200L2.600 5.900H0.600Z" fill="none" stroke="#f2f2f2" stroke-width="0.950" stroke-linejoin="round"/><path d="M6.800 2.900Q8 4.500 6.800 6.100" fill="none" stroke="#e8e8e8" stroke-width="0.9"/><path d="M8.600 1.500Q10.800 4.500 8.600 7.500" fill="none" stroke="#77797d" stroke-width="0.9"/></svg>
<svg style="left:1018px;top:595.2px" width="13" height="10.4" viewBox="0 0 13 10.4"><rect x="0.900" y="2.600" width="10.200" height="6.800" rx="1.600" fill="#f0f0f0"/><rect x="11.300" y="4.600" width="1.200" height="2.800" rx="0.5" fill="#f0f0f0"/><path d="M1.200 0.300V2.900M3.600 0.300V2.900" stroke="#f0f0f0" stroke-width="1"/><path d="M0.300 2.300H4.600V4.400Q2.400 6.300 0.300 4.400Z" fill="#f0f0f0" stroke="#1e1f22" stroke-width="0.5"/></svg>
<div class="t" style="left:1066.00px;top:588.90px;font-size:8.8px;color:#f6f6f6;transform:scaleX(0.9221);transform-origin:0 50%;">16:28</div>
<div class="t" style="left:1042.12px;top:601.20px;font-size:8.8px;color:#f6f6f6;letter-spacing:0.017px;">02/02/2026</div>
</div></body></html>
